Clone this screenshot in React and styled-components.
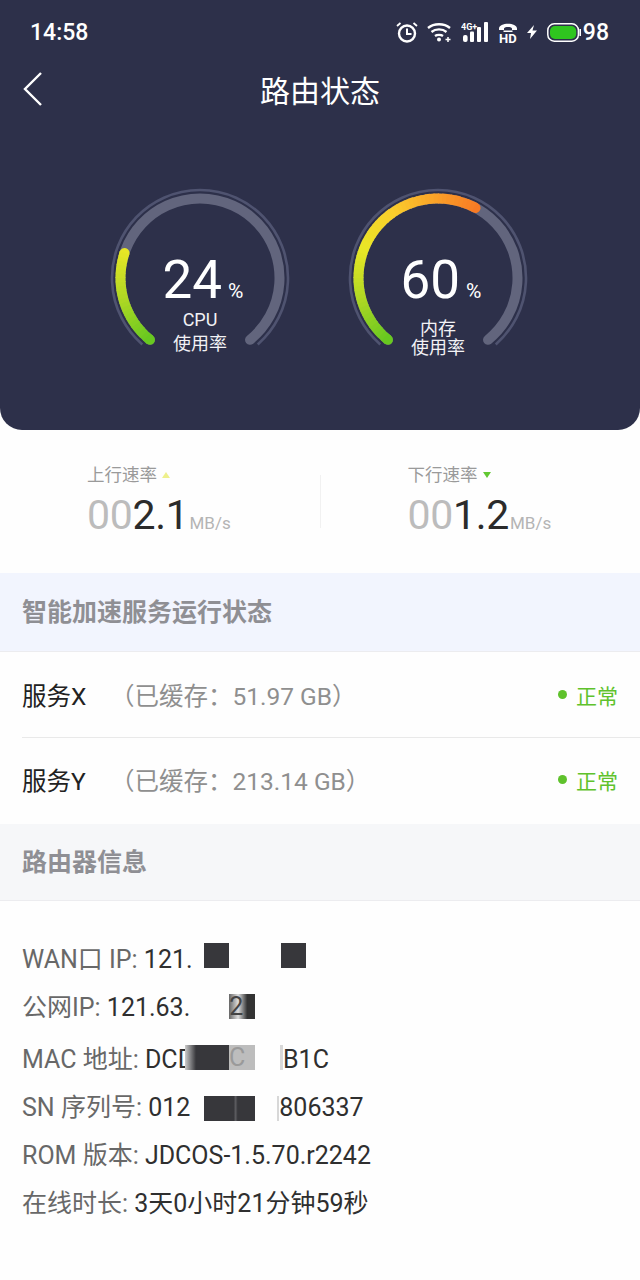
import React from 'react';
import styled, { createGlobalStyle } from 'styled-components';

const FONT = `Roboto, "Noto Sans CJK SC", sans-serif`;

const GlobalStyle = createGlobalStyle`
  html, body { margin: 0; padding: 0; background: #fefefe; }
  body { font-family: ${FONT}; }
`;

const Page = styled.div`
  width: 640px;
  height: 1280px;
  overflow: hidden;
  background: #fefefe;
`;

const Hero = styled.div`
  height: 430px;
  background: #2d304a;
  border-radius: 0 0 22px 22px;
  display: flex;
  flex-direction: column;
`;

const StatusBar = styled.div`
  height: 64px;
  padding: 0 31px 0 30px;
  display: flex;
  align-items: center;
  justify-content: space-between;
  color: #fff;
  font-size: 23px;
  font-weight: 500;
`;

const StatusIcons = styled.div`
  display: flex;
  align-items: center;
  gap: 9px;
`;

const Nav = styled.div`
  height: 50px;
  padding: 0 22px;
  display: flex;
  align-items: center;
  justify-content: center;
  position: relative;
  color: #fff;
  font-size: 30px;
`;

const Back = styled.svg`
  position: absolute;
  left: 22px;
  top: 8px;
`;

const Gauges = styled.div`
  display: flex;
  padding: 74px 0 0 110px;
  gap: 58px;
`;

const GaugeBox = styled.div`
  position: relative;
  width: 180px;
  height: 180px;
  flex: none;
`;

const GaugeText = styled.div`
  position: absolute;
  left: 0;
  right: 0;
  top: 61px;
  display: flex;
  flex-direction: column;
  align-items: center;
  color: #fff;
`;

const Value = styled.div`
  display: flex;
  align-items: baseline;
  height: 62px;
  line-height: 62px;
  font-size: 53px;
  padding-left: 6px;
`;

const Percent = styled.span`
  font-size: 21px;
  margin-left: 6px;
`;

const GaugeLabel = styled.div`
  font-size: 18px;
  line-height: ${p => p.$line}px;
  text-align: center;
  margin-top: ${p => p.$gap}px;
  color: #f2f2f5;
`;

const Speeds = styled.div`
  height: 143px;
  display: flex;
  align-items: center;
`;

const SpeedCell = styled.div`
  flex: 1;
  padding-left: 87px;
  height: 77px;
  margin-top: -1px;
`;

const SpeedDivider = styled.div`
  width: 1px;
  height: 53px;
  background: #f1f1f1;
`;

const SpeedTitle = styled.div`
  display: flex;
  align-items: center;
  gap: 5px;
  font-size: 17.5px;
  line-height: 24px;
  color: #9a9a9a;
`;

const Arrow = styled.span`
  width: 0;
  height: 0;
  border-left: 4px solid transparent;
  border-right: 4px solid transparent;
  border-bottom: ${p => (p.$up ? '6px solid #eef08c' : 'none')};
  border-top: ${p => (p.$up ? 'none' : '6px solid #62c832')};
`;

const SpeedValue = styled.div`
  display: flex;
  align-items: baseline;
  font-size: 41px;
  letter-spacing: -0.3px;
  line-height: 48px;
  color: #2b2b2b;
  margin-top: 4px;
`;

const Zeros = styled.span`
  color: #bcbcbc;
`;

const Unit = styled.span`
  font-size: 17px;
  letter-spacing: 0;
  color: #b4b4b4;
  margin-left: 1px;
`;

const SectionHead = styled.div`
  height: ${p => p.$h}px;
  box-sizing: border-box;
  padding: 0 0 4px 22px;
  display: flex;
  align-items: center;
  font-size: 25px;
  font-weight: 700;
  color: #8f8f94;
  background: ${p => p.$bg};
  border-bottom: 1px solid #ececef;
`;

const ServiceRow = styled.div`
  height: ${p => p.$h}px;
  margin-left: 22px;
  padding: 0 22px ${p => p.$pb}px 0;
  box-sizing: border-box;
  display: flex;
  align-items: center;
  border-bottom: ${p => (p.$line ? '1px solid #e9e9e9' : 'none')};
  font-size: 24.5px;
  color: #222;
`;

const ServiceName = styled.span`
  width: 88px;
`;

const Cached = styled.span`
  color: #8f8f8f;
  flex: 1;
`;

const Status = styled.span`
  display: flex;
  align-items: center;
  gap: 9px;
  color: #5fc22c;
  font-size: 21px;
`;

const Dot = styled.span`
  width: 9px;
  height: 9px;
  border-radius: 50%;
  background: #5fc22c;
`;

const InfoList = styled.div`
  padding: 35px 22px 0;
`;

const InfoRow = styled.div`
  display: flex;
  align-items: baseline;
  height: ${p => p.$h || 48}px;
  line-height: 48px;
  font-size: 25px;
  white-space: pre;
  color: #2f2f2f;
`;

const InfoLabel = styled.span`
  color: #686868;
`;

const Redact = styled.span`
  width: ${p => p.$w}px;
  height: 25px;
  line-height: 25px;
  margin-left: ${p => p.$ml}px;
  margin-top: ${p => p.$mt}px;
  background: ${p => p.$bg || '#37373b'};
  color: ${p => p.$ink || 'transparent'};
  align-self: flex-start;
  flex: none;
`;

const polar = (cx, cy, r, deg) => {
  const a = ((deg - 90) * Math.PI) / 180;
  return [cx + r * Math.cos(a), cy + r * Math.sin(a)];
};

const arc = (cx, cy, r, from, to) => {
  const [x1, y1] = polar(cx, cy, r, from);
  const [x2, y2] = polar(cx, cy, r, to);
  const large = to - from > 180 ? 1 : 0;
  return `M${x1.toFixed(2)} ${y1.toFixed(2)}A${r} ${r} 0 ${large} 1 ${x2.toFixed(2)} ${y2.toFixed(2)}`;
};

const stops = [
  [0, [104, 200, 32]],
  [35, [176, 216, 36]],
  [70, [232, 230, 38]],
  [105, [250, 206, 44]],
  [140, [250, 158, 40]],
  [172, [248, 118, 36]],
];

const colorAt = s => {
  for (let i = 1; i < stops.length; i++) {
    if (s <= stops[i][0]) {
      const t = (s - stops[i - 1][0]) / (stops[i][0] - stops[i - 1][0]);
      const c = stops[i - 1][1].map((v, k) => Math.round(v + (stops[i][1][k] - v) * t));
      return `rgb(${c.join(',')})`;
    }
  }
  return `rgb(${stops[stops.length - 1][1].join(',')})`;
};

const START = -141;
const END = 141;

const Gauge = ({ percent, children }) => {
  const c = 90;
  const sweep = ((END - START) * percent) / 100;
  const step = 3;
  const parts = [];
  for (let s = 0; s < sweep; s += step) {
    parts.push([s, Math.min(s + step + 0.6, sweep)]);
  }
  return (
    <GaugeBox>
      <svg width="180" height="180" viewBox="0 0 180 180">
        <path d={arc(c, c, 88, START + 2, END - 2)} fill="none" stroke="#4f5370" strokeWidth="2.6" />
        <path d={arc(c, c, 79.5, START, END)} fill="none" stroke="#62657d" strokeWidth="10" strokeLinecap="round" />
        <path d={arc(c, c, 79.5, START, START + 0.6)} fill="none" stroke={colorAt(0)} strokeWidth="10" strokeLinecap="round" />
        <path d={arc(c, c, 79.5, START + sweep - 0.6, START + sweep)} fill="none" stroke={colorAt(sweep)} strokeWidth="10" strokeLinecap="round" />
        {parts.map(([a, b]) => (
          <path key={a} d={arc(c, c, 79.5, START + a, START + b)} fill="none" stroke={colorAt(a)} strokeWidth="10" />
        ))}
      </svg>
      <GaugeText>{children}</GaugeText>
    </GaugeBox>
  );
};

const AlarmIcon = () => (
  <svg width="22" height="21" viewBox="0 0 22 21" fill="none" stroke="#fff">
    <circle cx="11" cy="11.5" r="8" strokeWidth="2.4" />
    <path d="M11 6.5V12H15.5" strokeWidth="2" />
    <path d="M1 4L4.5 1M21 4L17.5 1" strokeWidth="1.8" />
  </svg>
);

const WifiIcon = () => (
  <svg width="25" height="20" viewBox="0 0 25 20" fill="none" stroke="#fff" strokeWidth="2.3">
    <path d="M1 6C7 1 17 1 23 6" />
    <path d="M4.5 10C8.5 6.6 15.5 6.6 19.5 10" />
    <path d="M8 14C10 12.4 14 12.4 16 14" />
    <circle cx="12" cy="17.6" r="2" fill="#fff" stroke="none" />
    <path d="M21 15V20M18.5 17.5H23.5" strokeWidth="1.5" />
  </svg>
);

const SignalIcon = () => (
  <svg width="27" height="20" viewBox="0 0 27 20" fill="#fff">
    <text x="0" y="7.5" fontSize="9" fontWeight="700" fontFamily="Roboto, sans-serif">4G+</text>
    <rect x="2" y="13" width="4.6" height="7" rx="2" />
    <rect x="9" y="9.5" width="4" height="10.5" rx="1" />
    <rect x="16" y="5" width="4" height="15" rx="1" />
    <rect x="23" y="0" width="4" height="20" rx="1" />
  </svg>
);

const HdIcon = () => (
  <svg width="21" height="27" viewBox="-1 -3 21 27" fill="#fff">
    <path d="M1 6.5C1 0 19 0 19 6.5V8H14V6.4C13 4.5 7 4.5 6 6.4V8H1Z" />
    <path d="M5.5 8.5H14.5V10H5.5Z" />
    <text x="1" y="21" fontSize="13" fontWeight="700" fontFamily="Roboto, sans-serif">HD</text>
  </svg>
);

const BoltIcon = () => (
  <svg width="10" height="14" viewBox="0 0 10 14" fill="#fff">
    <path d="M7 0L0 8H4L3 14L10 5.5H5.5Z" />
  </svg>
);

const StatusBattery = styled.span`
  display: flex;
  align-items: center;
  gap: 2px;
  margin-left: 1px;
  font-size: 23px;
`;

const Battery = () => (
  <svg width="34" height="19" viewBox="0 0 34 19">
    <rect x="0.8" y="0.8" width="30.6" height="17.4" rx="6.5" fill="none" stroke="#fff" strokeWidth="1.5" />
    <rect x="3" y="3" width="26.2" height="13" rx="5" fill="#2fc51f" />
    <rect x="32.4" y="6" width="1.6" height="7" fill="#fff" />
  </svg>
);

export default function App() {
  return (
    <Page>
      <GlobalStyle />
      <Hero>
        <StatusBar>
          <span>14:58</span>
          <StatusIcons>
            <AlarmIcon />
            <WifiIcon />
            <SignalIcon />
            <HdIcon />
            <BoltIcon />
            <StatusBattery>
              <Battery />
              98
            </StatusBattery>
          </StatusIcons>
        </StatusBar>
        <Nav>
          <Back width="22" height="34" viewBox="0 0 22 34" fill="none" stroke="#fff" strokeWidth="2.4">
            <path d="M19 1L3 17L19 33" />
          </Back>
          路由状态
        </Nav>
        <Gauges>
          <Gauge percent={24.6}>
            <Value>24<Percent>%</Percent></Value>
            <GaugeLabel $line={24} $gap={-3}>CPU<br />使用率</GaugeLabel>
          </Gauge>
          <Gauge percent={60}>
            <Value>60<Percent>%</Percent></Value>
            <GaugeLabel $line={19} $gap={8}>内存<br />使用率</GaugeLabel>
          </Gauge>
        </Gauges>
      </Hero>

      <Speeds>
        <SpeedCell>
          <SpeedTitle>上行速率<Arrow $up /></SpeedTitle>
          <SpeedValue><Zeros>00</Zeros>2.1<Unit>MB/s</Unit></SpeedValue>
        </SpeedCell>
        <SpeedDivider />
        <SpeedCell>
          <SpeedTitle>下行速率<Arrow /></SpeedTitle>
          <SpeedValue><Zeros>00</Zeros>1.2<Unit>MB/s</Unit></SpeedValue>
        </SpeedCell>
      </Speeds>

      <SectionHead $h={79} $bg="#f2f5fe">智能加速服务运行状态</SectionHead>
      <ServiceRow $h={86} $pb={0} $line>
        <ServiceName>服务X</ServiceName>
        <Cached>（已缓存：51.97 GB）</Cached>
        <Status><Dot />正常</Status>
      </ServiceRow>
      <ServiceRow $h={86} $pb={3}>
        <ServiceName>服务Y</ServiceName>
        <Cached>（已缓存：213.14 GB）</Cached>
        <Status><Dot />正常</Status>
      </ServiceRow>
      <SectionHead $h={77} $bg="#f6f7f9">路由器信息</SectionHead>

      <InfoList>
        <InfoRow>
          <InfoLabel>WAN口 IP: </InfoLabel>121.
          <Redact $w={25} $ml={11} $mt={7} />
          <Redact $w={25} $ml={52} $mt={7} />
        </InfoRow>
        <InfoRow $h={52}>
          <InfoLabel>公网IP: </InfoLabel>121.63.
          <Redact $w={26} $ml={39} $mt={10} $ink="#444" $bg="linear-gradient(90deg,#666 0,#ddd 35%,#333 70%,#333)">2</Redact>
        </InfoRow>
        <InfoRow>
          <InfoLabel>MAC 地址: </InfoLabel>DCD
          <Redact $w={44} $ml={-9} $mt={9} $bg="linear-gradient(90deg,#ccc,#37373b 25%)" />
          <Redact $w={26} $ml={0} $mt={9} $ink="#9a9a9a" $bg="#bdbdbd">C</Redact>
          <Redact $w={3} $ml={25} $mt={9} $bg="#d8d8d8" />
          B1C
        </InfoRow>
        <InfoRow>
          <InfoLabel>SN 序列号: </InfoLabel>012
          <Redact $w={51} $ml={14} $mt={12} $bg="linear-gradient(90deg,#37373b 58%,#5c5c60 62%,#37373b 66%)" />
          <Redact $w={2} $ml={22} $mt={12} $bg="#d8d8d8" />
          806337
        </InfoRow>
        <InfoRow>
          <InfoLabel>ROM 版本: </InfoLabel>JDCOS-1.5.70.r2242
        </InfoRow>
        <InfoRow>
          <InfoLabel>在线时长: </InfoLabel>3天0小时21分钟59秒
        </InfoRow>
      </InfoList>
    </Page>
  );
}
